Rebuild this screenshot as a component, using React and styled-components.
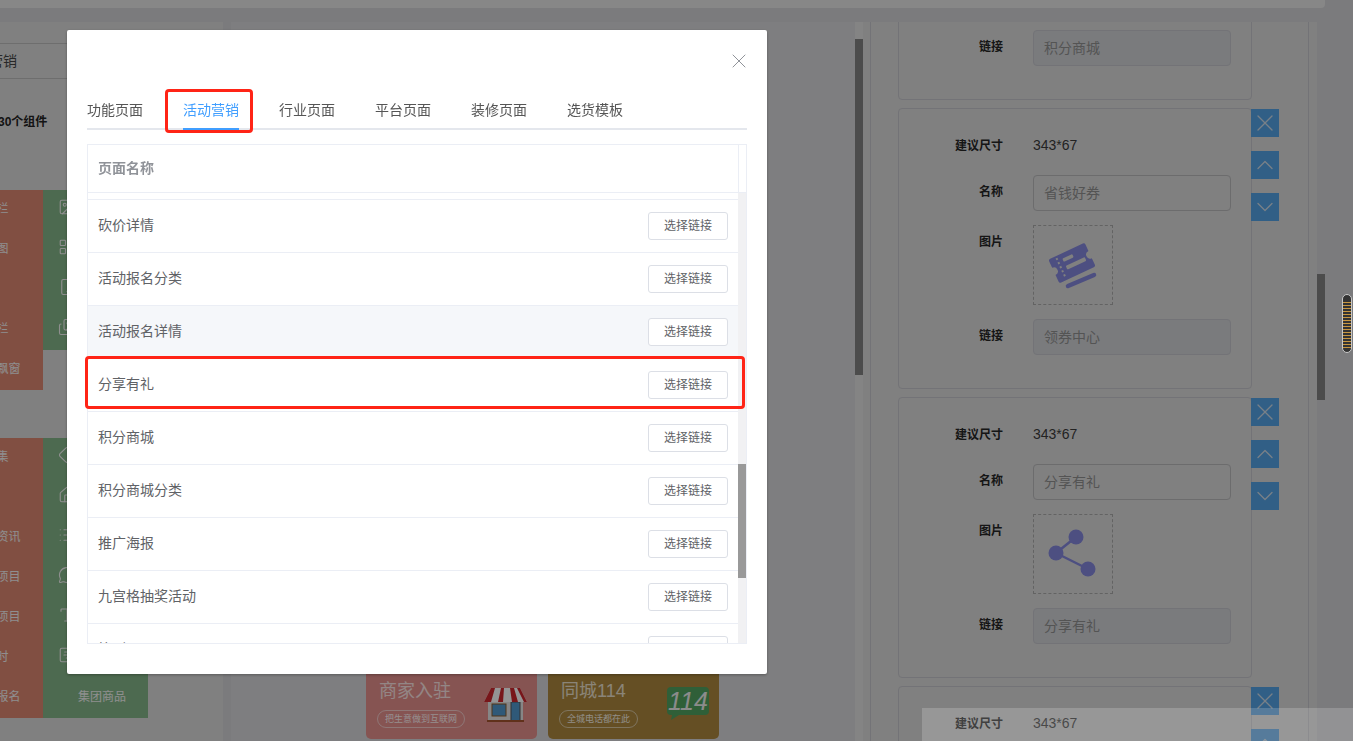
import React from "react";
import styled, { createGlobalStyle } from "styled-components";
import {
  X,
  ChevronUp,
  ChevronDown,
  Image,
  LayoutGrid,
  Smartphone,
  Images,
  Diamond,
  Home,
  List,
  MessageCircle,
  Type,
  SquareChartGantt,
} from "lucide-react";

const GlobalStyle = createGlobalStyle`
  html, body {
    margin: 0;
    padding: 0;
    height: 100%;
    overflow: hidden;
    background: #cdcdd0;
    font-family: "Noto Sans CJK SC", "Liberation Sans", sans-serif;
  }
  * { box-sizing: border-box; }
`;

const Page = styled.div`
  width: 1353px;
  height: 741px;
  overflow: hidden;
`;

const TopBar = styled.div`
  width: 1325px;
  height: 8px;
  background: #e1e1e1;
  border-radius: 0 0 4px 0;
`;

const Columns = styled.div`
  display: flex;
  margin-top: 14px;
  height: 719px;
`;

/* left component library */
const LeftPanel = styled.div`
  width: 223px;
  background: #d5d5d5;
  overflow: hidden;
  flex-shrink: 0;
`;

const LeftInner = styled.div`
  margin-left: -62px;
  width: 285px;
`;

const CategorySelect = styled.div`
  margin-top: 21px;
  height: 36px;
  line-height: 33px;
  padding-left: 23px;
  font-size: 14px;
  color: #444;
  border-top: 1px solid #b7b7b7;
  border-bottom: 1px solid #b7b7b7;
`;

const Summary = styled.div`
  margin-top: 34px;
  padding-left: 12px;
  height: 18px;
  line-height: 18px;
  font-size: 12px;
  font-weight: 700;
  font-family: "Liberation Sans", "Noto Sans CJK SC", sans-serif;
  color: #222;
`;

const TileGroup = styled.div`
  display: flex;
  align-items: flex-start;
  margin-top: ${({ $gap }) => $gap}px;
`;

const TileColumn = styled.div`
  width: 105px;
  background: ${({ $color }) => $color};
`;

const Tile = styled.div`
  height: 40px;
  display: flex;
  align-items: center;
  justify-content: ${({ $icon }) => ($icon ? "flex-start" : "center")};
  padding: ${({ $icon, $shift }) => ($icon ? "0 0 6px 15px" : `0 0 6px ${$shift || 0}px`)};
  font-size: 12px;
  color: #eeeeee;
`;

/* center preview */
const Gap = styled.div`
  width: 8px;
  flex-shrink: 0;
`;

const CenterPanel = styled.div`
  width: 624px;
  background: #d3d3d5;
  display: flex;
  flex-direction: column;
  justify-content: flex-end;
  padding: 0 0 2px 135px;
  flex-shrink: 0;
`;

const PromoRow = styled.div`
  display: flex;
  gap: 11px;
`;

const PromoCard = styled.div`
  position: relative;
  width: 171px;
  height: 80px;
  border-radius: 5px;
  background: ${({ $color }) => $color};
  padding: 21px 0 0 11px;
  color: #ffffff;
`;

const PromoTitle = styled.div`
  font-size: 18px;
  line-height: 22px;
  opacity: 0.72;
  margin-left: 2px;
  font-family: "Liberation Sans", "Noto Sans CJK SC", sans-serif;
`;

const PromoPill = styled.div`
  display: inline-block;
  margin-top: 8px;
  height: 18px;
  line-height: 15px;
  padding: 0 7px;
  font-size: 9px;
  border: 1px solid rgba(255, 255, 255, 0.6);
  border-radius: 9px;
  opacity: 0.85;
`;

const PromoIcon = styled.svg`
  position: absolute;
  right: ${({ $right }) => $right}px;
  top: 28px;
`;

const ScrollTrack = styled.div`
  width: 8px;
  height: 100%;
  background: ${({ $color }) => $color};
  flex-shrink: 0;
`;

const ScrollThumb = styled.div`
  height: ${({ $height }) => $height}px;
  margin-top: ${({ $top }) => $top}px;
  background: ${({ $color }) => $color};
`;

/* right settings */
const RightPanel = styled.div`
  width: 454px;
  height: 100%;
  background: #d5d5d5;
  padding: 0 8px 0 7px;
  overflow: hidden;
  flex-shrink: 0;
`;

const RightInner = styled.div`
  height: 100%;
  border-left: 1px solid #c0c0c6;
  border-right: 1px solid #c0c0c6;
  padding: 0 0 0 27px;
  overflow: hidden;
`;

const CardStack = styled.div`
  margin-top: -203px;
  display: flex;
  flex-direction: column;
  gap: 8px;
`;

const CardRow = styled.div`
  display: flex;
  align-items: flex-start;
`;

const Card = styled.div`
  width: 354px;
  height: 281px;
  border: 1px solid #c0c0c6;
  border-radius: 4px;
  padding: 20px 20px 0 0;
  display: flex;
  flex-direction: column;
  gap: 14px;
`;

const FieldRow = styled.div`
  display: flex;
  align-items: flex-start;
`;

const FieldLabel = styled.div`
  width: 104px;
  text-align: right;
  font-size: 12px;
  font-weight: 700;
  line-height: 32px;
  color: #262626;
  flex-shrink: 0;
`;

const FieldValue = styled.div`
  margin-left: 30px;
  font-size: 14px;
  line-height: 32px;
  font-family: "Liberation Sans", sans-serif;
  color: #3a3a3a;
`;

const FieldInput = styled.div`
  margin-left: 30px;
  width: 198px;
  height: 36px;
  line-height: 32px;
  padding-left: 10px;
  font-size: 14px;
  color: #8c8c8c;
  border: 1px solid ${({ $disabled }) => ($disabled ? "#c0c0c6" : "#b4b4b6")};
  border-radius: 4px;
  background: ${({ $disabled }) => ($disabled ? "#cbcdd1" : "#d5d5d5")};
`;

const ImageBox = styled.div`
  margin-left: 30px;
  width: 80px;
  height: 80px;
  border: 1px dashed #a6a6a6;
`;

const SideActions = styled.div`
  display: flex;
  flex-direction: column;
  gap: 14px;
  padding-top: 1px;
  margin-left: -1px;
`;

const SideButton = styled.div`
  width: 28px;
  height: 28px;
  display: flex;
  align-items: center;
  justify-content: center;
  background: #529fe0;
  color: #c8d6e2;
`;

/* modal */
const Overlay = styled.div`
  position: fixed;
  inset: 0;
  background: rgba(0, 0, 0, 0.4);
`;

const Modal = styled.div`
  position: relative;
  width: 700px;
  height: 644px;
  margin: 30px 0 0 67px;
  padding: 0 20px;
  background: #ffffff;
  border-radius: 2px;
  box-shadow: 0 1px 3px rgba(0, 0, 0, 0.3);
`;

const ModalHeader = styled.div`
  height: 62px;
  margin-right: -4px;
  display: flex;
  align-items: center;
  justify-content: flex-end;
  color: #909399;
`;

const TabBar = styled.div`
  display: flex;
  gap: 40px;
  height: 38px;
  border-bottom: 2px solid #e4e7ed;
`;

const Tab = styled.div`
  height: 38px;
  line-height: 34px;
  font-size: 14px;
  color: ${({ $active }) => ($active ? "#409eff" : "#555555")};
  border-bottom: 2px solid ${({ $active }) => ($active ? "#409eff" : "transparent")};
`;

const Table = styled.div`
  margin-top: 14px;
  height: 500px;
  border: 1px solid #ebeef5;
`;

const TableHead = styled.div`
  display: flex;
  height: 48px;
  border-bottom: 1px solid #ebeef5;
`;

const HeadCell = styled.div`
  flex: 1;
  padding-left: 10px;
  line-height: 45px;
  font-size: 14px;
  font-weight: 700;
  color: #909399;
`;

const HeadGutter = styled.div`
  width: 8px;
  border-left: 1px solid #ebeef5;
`;

const TableBody = styled.div`
  display: flex;
  height: 450px;
`;

const Rows = styled.div`
  flex: 1;
  overflow: hidden;
`;

const LeadRow = styled.div`
  height: 7px;
  border-bottom: 1px solid #ebeef5;
`;

const Row = styled.div`
  height: 53px;
  flex-shrink: 0;
  display: flex;
  align-items: center;
  justify-content: space-between;
  padding: 0 10px;
  border-bottom: 1px solid #ebeef5;
  background: ${({ $hover }) => ($hover ? "#f5f7fa" : "#ffffff")};
`;

const RowName = styled.div`
  font-size: 14px;
  line-height: 20px;
  padding-bottom: 5px;
  color: #606266;
`;

const PickButton = styled.div`
  width: 80px;
  height: 28px;
  line-height: 24px;
  text-align: center;
  font-size: 12px;
  color: #606266;
  background: #ffffff;
  border: 1px solid #dcdfe6;
  border-radius: 3px;
`;

const RedMark = styled.div`
  position: absolute;
  left: ${({ $left }) => $left}px;
  top: ${({ $top }) => $top}px;
  width: ${({ $width }) => $width}px;
  height: ${({ $height }) => $height}px;
  border: 3px solid #ff2416;
  border-radius: 4px;
`;

/* things floating over the dimmed page */
const BottomStrip = styled.div`
  position: fixed;
  left: 922px;
  right: 0;
  bottom: 0;
  height: 33px;
  background: rgba(255, 255, 255, 0.18);
`;

const FloatHandle = styled.div`
  position: fixed;
  left: 1342px;
  top: 294px;
  width: 10px;
  height: 59px;
  border: 1px solid #c8c8c8;
  border-radius: 5px;
  background: repeating-linear-gradient(
      to bottom,
      #c8963f 0,
      #c8963f 1px,
      #333333 1px,
      #333333 3px
    )
    0 7px / 100% 48px no-repeat #333333;
`;

const tilesTop = ["导航栏", "轮播图", "", "标题栏", "悬浮式飘窗"];
const iconsTop = [Image, LayoutGrid, Smartphone, Images];
const tilesBottom = ["收藏集", "", "本地新资讯", "服务类项目", "招商类项目", "倒计时", "线上新报名"];
const iconsBottom = [Diamond, Home, List, MessageCircle, Type, SquareChartGantt];

const tabs = ["功能页面", "活动营销", "行业页面", "平台页面", "装修页面", "选货模板"];
const pages = [
  "砍价详情",
  "活动报名分类",
  "活动报名详情",
  "分享有礼",
  "积分商城",
  "积分商城分类",
  "推广海报",
  "九宫格抽奖活动",
  "签到",
];

const TicketArt = () => (
  <svg width="78" height="78" viewBox="0 0 78 78">
    <g transform="rotate(-25 38 37)">
      <path
        d="M20 24h36a2 2 0 0 1 2 2v7a4 4 0 0 0 0 8v7a2 2 0 0 1-2 2H20a2 2 0 0 1-2-2v-7a4 4 0 0 0 0-8v-7a2 2 0 0 1 2-2z"
        fill="#8084d8"
      />
      <path d="M26 26v22" stroke="#d5d5d5" strokeWidth="2" strokeDasharray="2 2.5" />
      <rect x="31" y="29" width="11" height="3.5" rx="1" fill="#d5d5d5" />
      <rect x="31" y="37" width="21" height="4" rx="1" fill="#d5d5d5" />
    </g>
    <path d="M34 60l26-11" stroke="#8084d8" strokeWidth="4.5" strokeLinecap="round" fill="none" />
  </svg>
);

const ShareArt = () => (
  <svg width="78" height="78" viewBox="0 0 78 78">
    <path d="M22 38L42 22M22 38l32 16" stroke="#8084d8" strokeWidth="2.5" fill="none" />
    <circle cx="42" cy="22" r="7.5" fill="#8084d8" />
    <circle cx="22" cy="38" r="7.5" fill="#8084d8" />
    <circle cx="54" cy="54" r="7.5" fill="#8084d8" />
  </svg>
);

const cards = [
  { name: "积分商城", link: "积分商城", art: <TicketArt /> },
  { name: "省钱好券", link: "领券中心", art: <TicketArt /> },
  { name: "分享有礼", link: "分享有礼", art: <ShareArt /> },
  { name: "签到有礼", link: "签到", art: <ShareArt /> },
];

const ShopIcon = () => (
  <PromoIcon $right={10} width="43" height="36" viewBox="0 0 43 36">
    <rect x="4" y="11" width="35" height="23" fill="#e0e0e0" />
    <rect x="8" y="17" width="14" height="12" fill="#4f94c8" stroke="#8a5a2a" strokeWidth="1" />
    <rect x="27" y="15" width="9" height="19" fill="#4f94c8" stroke="#555" strokeWidth="1" />
    <rect x="3" y="33" width="37" height="2" fill="#a0522d" />
    <path d="M7 1h29l7 14H0z" fill="#f7f7f7" />
    <path d="M7 1h4l-4 14H0zM17 1h3l-1 14h-5zM26 1h4l4 14h-6zM36 1l7 14h-3L33 1z" fill="#c8252c" />
  </PromoIcon>
);

const BubbleIcon = () => (
  <PromoIcon $right={10} width="42" height="33" viewBox="0 0 42 33">
    <path
      d="M4 0h34a4 4 0 0 1 4 4v20a4 4 0 0 1-4 4H12l-8 5 1-5H4a4 4 0 0 1-4-4V4a4 4 0 0 1 4-4z"
      fill="#4f9f5e"
    />
    <text
      x="21"
      y="23"
      textAnchor="middle"
      fontSize="25"
      fontStyle="italic"
      fontFamily="Liberation Sans, sans-serif"
      fill="#e8e8e8"
    >
      114
    </text>
  </PromoIcon>
);

export default function App() {
  return (
    <Page>
      <GlobalStyle />
      <TopBar />
      <Columns>
        <LeftPanel>
          <LeftInner>
            <CategorySelect>活动营销</CategorySelect>
            <Summary>当前页面30个组件</Summary>
            <TileGroup $gap={59}>
              <TileColumn $color="#d8846e">
                {tilesTop.map((t, i) => (
                  <Tile key={i}>{t}</Tile>
                ))}
              </TileColumn>
              <TileColumn $color="#80b185">
                {iconsTop.map((Icon, i) => (
                  <Tile key={i} $icon>
                    <Icon size={18} strokeWidth={1.5} />
                  </Tile>
                ))}
              </TileColumn>
            </TileGroup>
            <TileGroup $gap={48}>
              <TileColumn $color="#d8846e">
                {tilesBottom.map((t, i) => (
                  <Tile key={i}>{t}</Tile>
                ))}
              </TileColumn>
              <TileColumn $color="#80b185">
                {iconsBottom.map((Icon, i) => (
                  <Tile key={i} $icon>
                    <Icon size={18} strokeWidth={1.5} />
                  </Tile>
                ))}
                <Tile $shift={13}>集团商品</Tile>
              </TileColumn>
            </TileGroup>
          </LeftInner>
        </LeftPanel>
        <Gap />
        <CenterPanel>
          <PromoRow>
            <PromoCard $color="#df8c89">
              <PromoTitle>商家入驻</PromoTitle>
              <PromoPill>把生意做到互联网</PromoPill>
              <ShopIcon />
            </PromoCard>
            <PromoCard $color="#a8843c">
              <PromoTitle>同城114</PromoTitle>
              <PromoPill>全城电话都在此</PromoPill>
              <BubbleIcon />
            </PromoCard>
          </PromoRow>
        </CenterPanel>
        <ScrollTrack $color="#dcdcdc">
          <ScrollThumb $top={17} $height={336} $color="#7f7f7f" />
        </ScrollTrack>
        <RightPanel>
          <RightInner>
            <CardStack>
              {cards.map((c) => (
                <CardRow key={c.name}>
                  <Card>
                    <FieldRow>
                      <FieldLabel>建议尺寸</FieldLabel>
                      <FieldValue>343*67</FieldValue>
                    </FieldRow>
                    <FieldRow>
                      <FieldLabel>名称</FieldLabel>
                      <FieldInput>{c.name}</FieldInput>
                    </FieldRow>
                    <FieldRow>
                      <FieldLabel>图片</FieldLabel>
                      <ImageBox>{c.art}</ImageBox>
                    </FieldRow>
                    <FieldRow>
                      <FieldLabel>链接</FieldLabel>
                      <FieldInput $disabled>{c.link}</FieldInput>
                    </FieldRow>
                  </Card>
                  <SideActions>
                    <SideButton>
                      <X size={28} strokeWidth={1.1} />
                    </SideButton>
                    <SideButton>
                      <ChevronUp size={28} strokeWidth={1.1} />
                    </SideButton>
                    <SideButton>
                      <ChevronDown size={28} strokeWidth={1.1} />
                    </SideButton>
                  </SideActions>
                </CardRow>
              ))}
            </CardStack>
          </RightInner>
        </RightPanel>
        <ScrollTrack $color="#cdcdd0">
          <ScrollThumb $top={252} $height={126} $color="#7f7f7f" />
        </ScrollTrack>
      </Columns>

      <Overlay>
        <Modal>
          <ModalHeader>
            <X size={24} strokeWidth={1} />
          </ModalHeader>
          <TabBar>
            {tabs.map((t) => (
              <Tab key={t} $active={t === "活动营销"}>
                {t}
              </Tab>
            ))}
          </TabBar>
          <Table>
            <TableHead>
              <HeadCell>页面名称</HeadCell>
              <HeadGutter />
            </TableHead>
            <TableBody>
              <Rows>
                <LeadRow />
                {pages.map((p) => (
                  <Row key={p} $hover={p === "活动报名详情"}>
                    <RowName>{p}</RowName>
                    <PickButton>选择链接</PickButton>
                  </Row>
                ))}
              </Rows>
              <ScrollTrack $color="#f1f1f3">
                <ScrollThumb $top={271} $height={114} $color="#999999" />
              </ScrollTrack>
            </TableBody>
          </Table>
          <RedMark $left={98} $top={59} $width={88} $height={44} />
          <RedMark $left={18} $top={326} $width={660} $height={53} />
        </Modal>
      </Overlay>
      <BottomStrip />
      <FloatHandle />
    </Page>
  );
}
